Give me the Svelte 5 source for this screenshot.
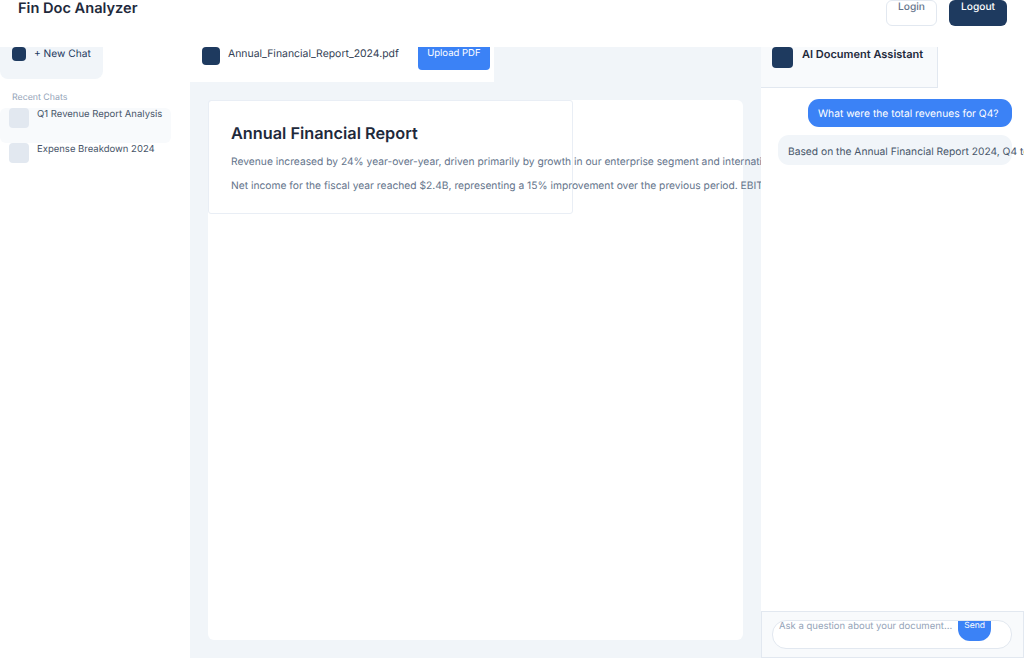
<script>
  const chats = [
    { title: "Q1 Revenue Report Analysis", active: true },
    { title: "Expense Breakdown 2024", active: false },
  ];
</script>

<div class="app">
  <header class="topbar">
    <h1 class="brand">Fin Doc Analyzer</h1>
    <div class="auth">
      <div class="btn login">Login</div>
      <div class="btn logout">Logout</div>
    </div>
  </header>

  <div class="main">
    <aside class="sidebar">
      <div class="new-chat">
        <span class="icon small"></span>
        <span>+ New Chat</span>
      </div>
      <div class="recent">Recent Chats</div>
      {#each chats as chat}
        <div class="chat-row" class:active={chat.active}>
          <span class="chat-icon"></span>
          <span class="chat-title">{chat.title}</span>
        </div>
      {/each}
    </aside>

    <section class="viewer">
      <div class="toolbar">
        <span class="icon doc"></span>
        <span class="filename">Annual_Financial_Report_2024.pdf</span>
        <div class="upload">Upload PDF</div>
      </div>
      <div class="page">
        <div class="sheet">
          <h2>Annual Financial Report</h2>
          <p>Revenue increased by 24% year-over-year, driven primarily by growth in our enterprise segment and international expansion across all regions.</p>
          <p>Net income for the fiscal year reached $2.4B, representing a 15% improvement over the previous period. EBITDA margins expanded to 32%.</p>
        </div>
      </div>
    </section>

    <aside class="assistant">
      <div class="assistant-head">
        <span class="icon bot"></span>
        <span>AI Document Assistant</span>
      </div>
      <div class="messages">
        <div class="msg user">What were the total revenues for Q4?</div>
        <div class="msg reply">Based on the Annual Financial Report 2024, Q4 total revenues reached $1.2B, up 24% from the prior year.</div>
      </div>
      <div class="composer">
        <div class="input">
          <span class="placeholder">Ask a question about your document...</span>
          <div class="send">Send</div>
        </div>
      </div>
    </aside>
  </div>
</div>

<style>
  :global(body) {
    margin: 0;
    font-family: Inter, "Liberation Sans", sans-serif;
    background: #fff;
    text-rendering: geometricPrecision;
  }

  .app {
    width: 1024px;
    height: 658px;
    display: flex;
    flex-direction: column;
    overflow: hidden;
    color: #1e293b;
  }

  .topbar {
    height: 47px;
    flex-shrink: 0;
    display: flex;
    justify-content: space-between;
    align-items: flex-start;
    padding: 0 17px 0 18px;
    box-sizing: border-box;
  }
  .brand {
    margin: 0;
    font-size: 14.6px;
    line-height: 17px;
    font-weight: 600;
  }
  .auth {
    display: flex;
    gap: 12px;
  }
  .btn {
    height: 26px;
    box-sizing: border-box;
    border-radius: 6px;
    font-size: 10.2px;
    font-weight: 500;
    line-height: 12px;
    text-align: center;
  }
  .login {
    width: 51px;
    border: 1px solid #e2e8f0;
    color: #64748b;
  }
  .logout {
    width: 58px;
    padding-top: 1px;
    background: #1e3a5f;
    color: #fff;
  }

  .main {
    flex: 1;
    display: flex;
    min-height: 0;
  }

  .icon {
    display: block;
    flex-shrink: 0;
    background: #1e3a5f;
    border-radius: 4px;
  }

  .sidebar {
    width: 190px;
    flex-shrink: 0;
    box-sizing: border-box;
  }
  .new-chat {
    width: 103px;
    height: 32px;
    box-sizing: border-box;
    padding-left: 12px;
    display: flex;
    gap: 8px;
    font-size: 10.2px;
    line-height: 14px;
    color: #1e3a5f;
    background: #f1f5f9;
    border-radius: 0 0 8px 8px;
  }
  .icon.small {
    width: 14px;
    height: 14px;
  }
  .recent {
    margin: 12px 0 0 12px;
    height: 17px;
    font-size: 8.8px;
    line-height: 13px;
    color: #94a3b8;
  }
  .chat-row {
    width: 171px;
    height: 35px;
    box-sizing: border-box;
    padding-left: 9px;
    display: flex;
    gap: 8px;
    font-size: 9.5px;
    line-height: 13px;
    color: #475569;
    border-radius: 6px;
  }
  .chat-row.active {
    background: #f8fafc;
  }
  .chat-icon {
    width: 20px;
    height: 20px;
    flex-shrink: 0;
    background: #e2e8f0;
    border-radius: 4px;
  }

  .viewer {
    width: 571px;
    flex-shrink: 0;
    background: #f1f5f9;
    overflow: hidden;
  }
  .toolbar {
    width: 304px;
    height: 35px;
    box-sizing: border-box;
    padding-left: 12px;
    display: flex;
    background: #fff;
    font-size: 10.45px;
    line-height: 14px;
    color: #334155;
  }
  .icon.doc {
    width: 18px;
    height: 18px;
    margin-right: 8px;
  }
  .filename {
    white-space: nowrap;
    margin-right: 19px;
  }
  .upload {
    width: 72px;
    height: 23px;
    flex-shrink: 0;
    background: #3b82f6;
    color: #fff;
    font-size: 9.5px;
    line-height: 13px;
    text-align: center;
    border-radius: 0 0 4px 4px;
  }
  .page {
    width: 535px;
    height: 540px;
    margin: 18px 0 0 18px;
    background: #fff;
    border-radius: 6px;
  }
  .sheet {
    width: 365px;
    height: 114px;
    box-sizing: border-box;
    padding: 22px;
    border: 1px solid #e9eef5;
    border-radius: 3px;
    white-space: nowrap;
  }
  .sheet h2 {
    margin: 0 0 11px;
    font-size: 16.3px;
    line-height: 20px;
    font-weight: 600;
  }
  .sheet p {
    margin: 0 0 8px;
    font-size: 10.25px;
    line-height: 16px;
    color: #64748b;
  }

  .assistant {
    flex: 1;
    min-width: 0;
    display: flex;
    flex-direction: column;
    overflow: hidden;
    background: #fff;
  }
  .assistant-head {
    width: 177px;
    height: 41px;
    flex-shrink: 0;
    box-sizing: border-box;
    padding-left: 11px;
    display: flex;
    gap: 9px;
    font-size: 11px;
    line-height: 14px;
    font-weight: 600;
    background: #f8fafc;
    border-bottom: 1px solid #e2e8f0;
    border-right: 1px solid #e2e8f0;
  }
  .icon.bot {
    width: 21px;
    height: 21px;
  }
  .messages {
    flex: 1;
    padding: 11px 12px 0 17px;
    display: flex;
    flex-direction: column;
    align-items: flex-end;
    gap: 8.5px;
  }
  .msg {
    box-sizing: border-box;
    border-radius: 11px;
    white-space: nowrap;
    font-size: 10.25px;
    line-height: 14px;
  }
  .user {
    width: 204px;
    height: 27.5px;
    background: #3b82f6;
    color: #fff;
    padding: 8px 10px 0;
  }
  .reply {
    align-self: stretch;
    height: 30px;
    padding: 10px 10px 0;
    background: #f1f5f9;
    color: #475569;
  }
  .composer {
    height: 47px;
    flex-shrink: 0;
    box-sizing: border-box;
    padding: 8px 11px 0 10px;
    background: #f8fafc;
    border: 1px solid #e2e8f0;
  }
  .input {
    height: 29px;
    box-sizing: border-box;
    padding-left: 6px;
    display: flex;
    gap: 6px;
    background: #fff;
    border: 1px solid #e2e8f0;
    border-radius: 14px;
  }
  .placeholder {
    font-size: 9.5px;
    line-height: 12px;
    color: #94a3b8;
    white-space: nowrap;
  }
  .send {
    width: 33px;
    height: 20px;
    background: #3b82f6;
    color: #fff;
    font-size: 8.6px;
    line-height: 11px;
    text-align: center;
    border-radius: 0 0 12px 12px;
  }
</style>
